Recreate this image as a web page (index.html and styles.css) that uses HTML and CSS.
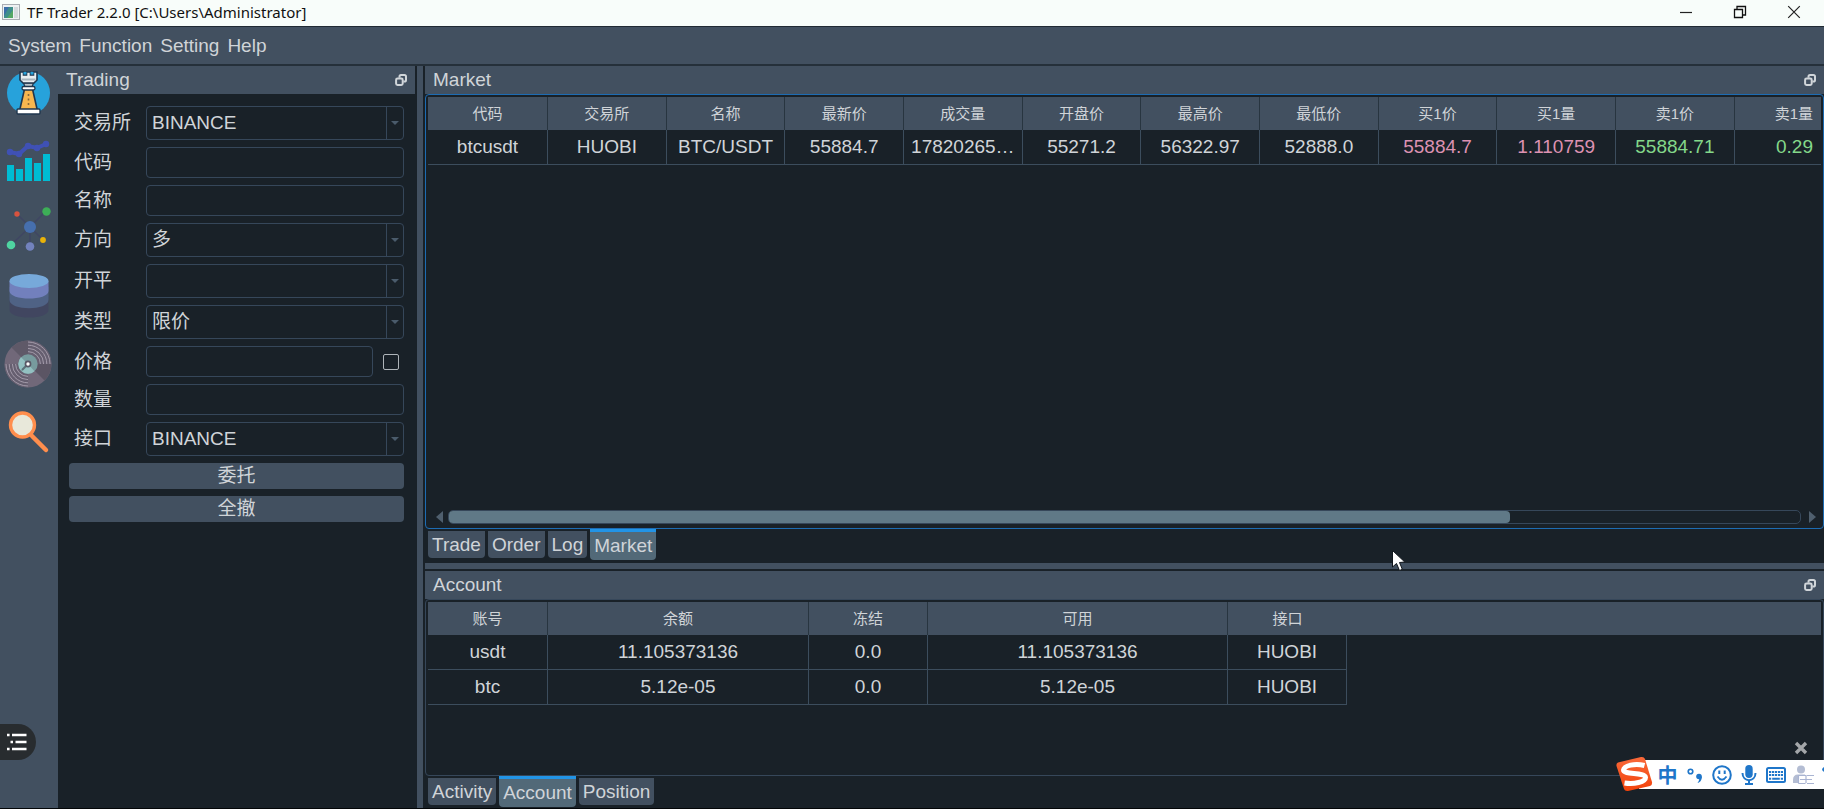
FILE: index.html
```html
<!DOCTYPE html>
<html lang="zh-CN">
<head>
<meta charset="utf-8">
<title>TF Trader 2.2.0</title>
<link rel="stylesheet" href="styles.css">
</head>
<body>
<svg class="defs" aria-hidden="true">
  <symbol id="float" viewBox="0 0 12 12">
    <path d="M4.5 3.8V2.6Q4.5 1 6 1H9.4Q11 1 11 2.6V6Q11 7.6 9.4 7.6H8.4" fill="none" stroke="#d0d5d9" stroke-width="2"/>
    <rect x="1.1" y="4.6" width="6.6" height="6.4" rx="1.4" fill="none" stroke="#d0d5d9" stroke-width="2"/>
  </symbol>
  <symbol id="down" viewBox="0 0 8 4"><path d="M0 0H8L4 4Z" fill="#4a5b6b"/></symbol>
</svg>

<header class="titlebar">
  <svg class="app-icon" viewBox="0 0 18 16" aria-hidden="true">
    <rect x=".5" y=".5" width="17" height="15" fill="#eef1f2" stroke="#a9aeb3"/>
    <rect x="2" y="3" width="9" height="11" fill="#3f8f8a"/><path d="M2 3H7L2 12Z" fill="#3b6fa8"/><path d="M11 6V14H5Z" fill="#55a865"/>
    <rect x="12" y="3" width="4" height="11" fill="#d5dadd"/>
  </svg>
  <h1 class="app-title">TF Trader 2.2.0 [C:\Users\Administrator]</h1>
  <div class="window-buttons">
    <button class="window-button" aria-label="Minimize"><svg viewBox="0 0 14 14"><path d="M1 7.5H13" stroke="#222" stroke-width="1.2"/></svg></button>
    <button class="window-button" aria-label="Restore"><svg viewBox="0 0 14 14"><path d="M1.5 4.5H9.5V12.5H1.5ZM4 4.5V1.5H12.5V10H9.5" fill="none" stroke="#111" stroke-width="1.3"/></svg></button>
    <button class="window-button" aria-label="Close"><svg viewBox="0 0 14 14"><path d="M1.2 1.2L12.8 12.8M12.8 1.2L1.2 12.8" stroke="#222" stroke-width="1.2"/></svg></button>
  </div>
</header>

<nav class="menubar">
  <button class="menu-item">System</button>
  <button class="menu-item">Function</button>
  <button class="menu-item">Setting</button>
  <button class="menu-item">Help</button>
</nav>

<div class="workspace">
  <aside class="toolbar">
    <button class="tool" aria-label="Strategy"><svg viewBox="0 0 48 48">
      <circle cx="24.5" cy="25" r="21.5" fill="#27a2db"/>
      <path d="M20.5 21H28.5L33.500 43H15.5Z" fill="#f7b64f" stroke="#20364d" stroke-width="1.6"/>
      <path d="M19.5 15H29.5L27.5 20H21.5Z" fill="#b9c3ca" stroke="#20364d" stroke-width="1.2"/>
      <path d="M16 4H19.5V7H22.5V4H26.5V7H29.5V4H33V12L30 15H19L16 12Z" fill="#e9eef1" stroke="#20364d" stroke-width="1.6"/>
      <path d="M19.5 4V6.500H22.5V4ZM26.500 4V6.500H29.500V4Z" fill="#27a2db"/>
      <path d="M17.5 11.5H31.5" stroke="#a9b5bd" stroke-width="2"/>
      <rect x="18" y="18.5" width="13" height="3.5" rx="1.7" fill="#fff" stroke="#20364d" stroke-width="1.3"/>
      <path d="M24.5 26V39" stroke="#8a6a3a" stroke-width="1.6" stroke-dasharray="2 2.5"/>
      <rect x="13" y="41" width="23" height="5" rx="1" fill="#fff" stroke="#20364d" stroke-width="1.4"/>
    </svg></button>
    <button class="tool" aria-label="Chart"><svg viewBox="0 0 48 48">
      <path d="M3 29H10V45H3ZM12 33H19V45H12ZM21 22H28V45H21ZM30 27H37V45H30ZM39 18H46V45H39Z" fill="#00bcd4"/>
      <path d="M6 16L15 18L24 10L33 12L42 8" fill="none" stroke="#3f51b5" stroke-width="4"/>
      <g fill="#3f51b5"><circle cx="6" cy="16" r="3.2"/><circle cx="15" cy="18" r="3.2"/><circle cx="24" cy="10" r="3.2"/><circle cx="33" cy="12" r="3.2"/><circle cx="42" cy="8" r="3.2"/></g>
    </svg></button>
    <button class="tool" aria-label="Network"><svg viewBox="0 0 48 48">
      <path d="M26 23L13 10M26 23L42 7M26 23L7 41M26 23L39 36M26 23V42" stroke="#3f4663" stroke-width="1.5"/>
      <circle cx="26" cy="23" r="6" fill="#466fae"/><circle cx="13" cy="10" r="2.7" fill="#d8533f"/><circle cx="42.5" cy="7.5" r="4.2" fill="#3dae57"/><circle cx="7" cy="41" r="4.3" fill="#4fd4a1"/><circle cx="39" cy="36" r="2.9" fill="#eab308"/><circle cx="26" cy="42.5" r="4.3" fill="#7282bd"/>
    </svg></button>
    <button class="tool" aria-label="Database"><svg viewBox="0 0 48 48">
      <path d="M5.500 25V38C5.500 48 44.500 48 44.500 38V25Z" fill="#414660"/>
      <path d="M5.500 15V28C5.500 39 44.500 39 44.500 28V15Z" fill="#4f6285"/>
      <path d="M5.500 9V19C5.500 29 44.500 29 44.500 19V9Z" fill="#7280bd"/>
      <ellipse cx="25" cy="9" rx="19.5" ry="7" fill="#77a9da"/>
    </svg></button>
    <button class="tool" aria-label="Backtest"><svg viewBox="0 0 48 48">
      <circle cx="24" cy="24" r="23.5" fill="#716879"/>
      <path d="M24 24V.5A23.5 23.5 0 0 0 7.5 7.5Z" fill="#5f5968"/><path d="M24 24H47.5A23.5 23.5 0 0 1 40.5 40.5Z" fill="#5b5564"/>
      <path d="M24 24V.5A23.5 23.5 0 0 1 47.5 24ZM24 24V47.5A23.5 23.5 0 0 1 .5 24Z" fill="#665f70"/>
      <g fill="none" stroke="#a39baa" stroke-width="1"><path d="M24 2A22 22 0 0 1 46 24M24 5.2A18.8 18.8 0 0 1 42.8 24M24 8.4A15.6 15.6 0 0 1 39.6 24M24 11.6A12.4 12.4 0 0 1 36.4 24M2 24A22 22 0 0 0 24 46M5.2 24A18.8 18.8 0 0 0 24 42.8M8.4 24A15.6 15.6 0 0 0 24 39.6M11.6 24A12.4 12.4 0 0 0 24 36.4"/></g>
      <circle cx="24" cy="24" r="9.7" fill="#779b9e"/><path d="M24 24L17 17.3A9.7 9.7 0 0 0 17 30.7ZM24 24L17.5 31.2A9.7 9.7 0 0 0 30.5 31.2Z" fill="#93c0c1"/>
      <path d="M24 24L18 30" stroke="#5c7178" stroke-width="2"/><circle cx="24" cy="24" r="3.4" fill="#595866"/><circle cx="24" cy="24" r="1.7" fill="#fff"/>
    </svg></button>
    <button class="tool" aria-label="Search"><svg viewBox="0 0 48 48">
      <path d="M28 28L42 42" stroke="#ff8e4d" stroke-width="4.5" stroke-linecap="round"/>
      <circle cx="18.5" cy="17" r="12" fill="#e8e8da" stroke="#ff8e4d" stroke-width="3.4"/>
    </svg></button>
  </aside>

  <section class="dock trading">
    <header class="dock-title"><h2>Trading</h2><button class="float-button" aria-label="Float Trading"><svg><use href="#float"/></svg></button></header>
    <form class="order-form">
      <label class="field-label" for="exchange">交易所</label>
      <div class="combo"><select id="exchange"><option>BINANCE</option></select><svg><use href="#down"/></svg></div>
      <label class="field-label" for="symbol">代码</label>
      <input class="line-edit" id="symbol" type="text">
      <label class="field-label" for="name">名称</label>
      <input class="line-edit" id="name" type="text">
      <label class="field-label" for="direction">方向</label>
      <div class="combo"><select id="direction"><option>多</option></select><svg><use href="#down"/></svg></div>
      <label class="field-label" for="offset">开平</label>
      <div class="combo"><select id="offset"><option></option></select><svg><use href="#down"/></svg></div>
      <label class="field-label" for="type">类型</label>
      <div class="combo"><select id="type"><option>限价</option></select><svg><use href="#down"/></svg></div>
      <label class="field-label" for="price">价格</label>
      <div class="price-row"><input class="line-edit" id="price" type="text"><input class="check" type="checkbox" aria-label="价格"></div>
      <label class="field-label" for="volume">数量</label>
      <input class="line-edit" id="volume" type="text">
      <label class="field-label" for="gateway">接口</label>
      <div class="combo"><select id="gateway"><option>BINANCE</option></select><svg><use href="#down"/></svg></div>
      <button class="push" type="button">委托</button>
      <button class="push" type="button">全撤</button>
    </form>
  </section>

  <div class="splitter-v"></div>

  <main class="right">
    <section class="dock market">
      <header class="dock-title"><h2>Market</h2><button class="float-button" aria-label="Float Market"><svg><use href="#float"/></svg></button></header>
      <div class="frame frame-active">
        <table class="grid market-grid">
          <thead><tr><th>代码</th><th>交易所</th><th>名称</th><th>最新价</th><th>成交量</th><th>开盘价</th><th>最高价</th><th>最低价</th><th>买1价</th><th>买1量</th><th>卖1价</th><th class="clipped">卖1量</th></tr></thead>
          <tbody><tr><td>btcusdt</td><td>HUOBI</td><td>BTC/USDT</td><td>55884.7</td><td>17820265…</td><td>55271.2</td><td>56322.97</td><td>52888.0</td><td class="bid">55884.7</td><td class="bid">1.110759</td><td class="ask">55884.71</td><td class="ask clipped">0.29</td></tr></tbody>
        </table>
        <div class="scrollbar">
          <svg class="scroll-arrow" viewBox="0 0 7 14"><path d="M7 1V13L0 7Z" fill="#4f5f6e"/></svg>
          <div class="scroll-track"><div class="scroll-thumb"></div></div>
          <svg class="scroll-arrow" viewBox="0 0 7 14"><path d="M0 1V13L7 7Z" fill="#4f5f6e"/></svg>
        </div>
      </div>
    </section>
    <div class="tabs">
      <button class="tab">Trade</button><button class="tab">Order</button><button class="tab">Log</button><button class="tab tab-active">Market</button>
    </div>
    <div class="splitter-h"></div>
    <section class="dock account">
      <header class="dock-title"><h2>Account</h2><button class="float-button" aria-label="Float Account"><svg><use href="#float"/></svg></button></header>
      <div class="frame">
        <table class="grid account-grid">
          <colgroup><col class="col-id"><col class="col-balance"><col class="col-frozen"><col class="col-free"><col class="col-gateway"><col></colgroup>
          <thead><tr><th>账号</th><th>余额</th><th>冻结</th><th>可用</th><th class="last">接口</th><th></th></tr></thead>
          <tbody>
            <tr><td>usdt</td><td>11.105373136</td><td>0.0</td><td>11.105373136</td><td>HUOBI</td></tr>
            <tr><td>btc</td><td>5.12e-05</td><td>0.0</td><td>5.12e-05</td><td>HUOBI</td></tr>
          </tbody>
        </table>
      </div>
    </section>
    <div class="tabs tabs-bottom">
      <button class="tab">Activity</button><button class="tab tab-active">Account</button><button class="tab">Position</button>
    </div>
  </main>
</div>

<button class="outline-toggle" aria-label="Outline"><svg viewBox="0 0 20 18"><path d="M0 2H2.600M5 2H19.500M3.500 9H6M8.500 9H19.500M0 16H2.600M5 16H19.500" stroke="#fff" stroke-width="2.6"/></svg></button>

<svg class="cursor" viewBox="0 0 16 24" aria-hidden="true"><path d="M1.5 1.5V18L5.5 14.5L8.5 21.5L11.3 20.3L8.5 13.5L13.8 13Z" fill="#fff" stroke="#10161c" stroke-width="1"/></svg>

<button class="ime-close" aria-label="Close"><svg viewBox="0 0 14 14"><path d="M2 2L12 12M12 2L2 12" stroke="#a3a6a9" stroke-width="3.4"/></svg></button>
<div class="ime">
  <svg class="ime-logo" viewBox="0 0 38 36" aria-hidden="true">
    <defs><linearGradient id="orange" x1="0" y1="0" x2="0" y2="1"><stop offset="0" stop-color="#f9693a"/><stop offset="1" stop-color="#f2420a"/></linearGradient></defs>
    <path d="M3 6.5L26 1Q29 .5 30 3L37 26Q37.5 29 35 30L13 35Q10 35.5 9 33L1.5 10Q1 7.500 3 6.5Z" fill="url(#orange)"/>
    <path d="M29.5 9.5C20 7 9 9.5 8.5 14C8.5 19 30 16 30.5 21.5C30.5 26 19 28.5 9.5 27" fill="none" stroke="#fff" stroke-width="5"/>
  </svg>
  <button class="ime-lang">中</button>
  <button class="ime-item" aria-label="Punctuation"><svg viewBox="0 0 20 20"><circle cx="5.5" cy="6.5" r="2.3" fill="none" stroke="#1f76c9" stroke-width="1.6"/><circle cx="14" cy="11.5" r="2.8" fill="#1f76c9"/><path d="M16.8 11.5C17 15 15 17.5 12.5 18C13.8 16 14.5 15 14 13Z" fill="#1f76c9"/></svg></button>
  <button class="ime-item" aria-label="Emoji"><svg viewBox="0 0 20 20"><circle cx="10" cy="10" r="8.8" fill="none" stroke="#1f76c9" stroke-width="2"/><path d="M7.3 5.5V9M12.7 5.5V9" stroke="#1f76c9" stroke-width="2"/><path d="M5.5 11.5Q10 18 14.5 11.5" fill="none" stroke="#1f76c9" stroke-width="1.8"/></svg></button>
  <button class="ime-item" aria-label="Voice"><svg viewBox="0 0 20 20"><rect x="6.3" y="0" width="7.4" height="13" rx="3.7" fill="#1f76c9"/><path d="M3.5 8C3.5 17.5 16.5 17.5 16.5 8M10 15V19M6 19H14" fill="none" stroke="#1f76c9" stroke-width="2"/></svg></button>
  <button class="ime-item" aria-label="Keyboard"><svg viewBox="0 0 20 20"><rect x="1" y="3" width="18" height="14" rx="1.5" fill="none" stroke="#1f76c9" stroke-width="2"/><path d="M3 7H17M3 10H17" stroke="#1f76c9" stroke-width="1.8" stroke-dasharray="2.2 .75"/><path d="M3 13.7H17" stroke="#1f76c9" stroke-width="2" stroke-dasharray="2.2 1 7.6 1"/></svg></button>
  <button class="ime-item ime-user" aria-label="Account"><svg viewBox="0 0 22 20"><circle cx="8" cy="4.5" r="4" fill="#b4bdd3"/><path d="M0 18V15Q0 9.5 5 9.5H12V18Z" fill="#b4bdd3"/><rect x="5" y="10" width="16" height="9" fill="#fff"/><path d="M5.5 10.5H12.5M14 10.5H21M7 14.5H19M13 10V18M5.5 18.5H12.5M14 18.5H21M5.5 10V18.5" fill="none" stroke="#a9b4d2" stroke-width="1.2"/></svg></button>
  <svg class="ime-edge" viewBox="0 0 2 20" aria-hidden="true"><path d="M2 3Q0 4 0 6L2 8Z" fill="#1f76c9"/></svg>
</div>
</body>
</html>
```

FILE: styles.css
```css
:root {
  --panel: #192128;
  --bar: #425060;
  --line: #36475a;
  --text: #d0d4d8;
  --accent: #2294e6;
}

* { box-sizing: border-box; }

body {
  margin: 0;
  height: 100vh;
  display: flex;
  flex-direction: column;
  overflow: hidden;
  background: var(--panel);
  border-bottom: 1px solid #030608;
  color: var(--text);
  font: 19px/24px "Liberation Sans", "Noto Sans CJK SC", sans-serif;
}

button, input, select { font: inherit; color: inherit; margin: 0; padding: 0; border: 0; background: none; }
h1, h2 { margin: 0; font: inherit; }
svg { display: block; }
.defs { position: absolute; width: 0; height: 0; }

.titlebar {
  display: flex;
  align-items: center;
  height: 26px;
  flex: none;
  padding: 0 23px 3px 2px;
  gap: 7px;
  background: #f8fdfa;
  color: #111;
}
.app-icon { width: 18px; height: 16px; }
.app-title { font: 15px/22px "Noto Sans", "Noto Sans CJK SC", sans-serif; }
.window-buttons { margin-left: auto; display: flex; gap: 40px; }
.window-button { width: 14px; height: 14px; }

.menubar {
  display: flex;
  gap: 8px;
  align-items: center;
  flex: none;
  height: 40px;
  padding: 0 8px;
  background: var(--bar);
  border-top: 1px solid #202a33;
  border-bottom: 2px solid #25303a;
}

.workspace { flex: 1; display: flex; min-height: 0; }

.toolbar {
  width: 58px;
  flex: none;
  display: flex;
  flex-direction: column;
  align-items: center;
  gap: 20px;
  padding: 2px 6px 0 4px;
  background: var(--bar);
}
.tool, .tool svg { width: 48px; height: 48px; }

.dock { display: flex; flex-direction: column; min-height: 0; }
.dock-title {
  display: flex;
  flex: none;
  align-items: center;
  justify-content: space-between;
  height: 28px;
  padding: 0 8px;
  background: var(--bar);
}
.float-button, .float-button svg { width: 12px; height: 12px; }

.trading { width: 357px; flex: none; }
.order-form {
  display: grid;
  grid-template-columns: 70px 1fr;
  column-gap: 7px;
  row-gap: 7px;
  align-items: center;
  padding: 12px 11px 0;
}
.field-label { padding-left: 5px; }
.line-edit {
  width: 100%;
  min-width: 0;
  height: 31px;
  padding: 0 6px;
  border: 1px solid var(--line);
  border-radius: 4px;
}
.combo {
  display: grid;
  grid-template-columns: 1fr 16px;
  align-items: center;
  height: 34px;
  border: 1px solid var(--line);
  border-radius: 4px;
}
.combo select {
  appearance: none;
  height: 32px;
  padding: 0 5px;
  border-right: 1px solid var(--line);
}
.combo svg { width: 8px; height: 4px; justify-self: center; }
.price-row { display: flex; align-items: center; gap: 10px; padding-right: 5px; }
.check { appearance: none; flex: none; width: 16px; height: 16px; border: 1px solid #aeb4b9; border-radius: 2px; }
.push {
  grid-column: 1 / -1;
  height: 26px;
  line-height: 26px;
  background: var(--bar);
  border-radius: 4px;
}

.splitter-v {
  width: 10px;
  flex: none;
  background: var(--bar);
  border: solid var(--panel);
  border-width: 0 2px;
}

.right { flex: 1; min-width: 0; display: flex; flex-direction: column; }
.market { flex: 463; }
.account { flex: 205; }

.frame {
  flex: 1;
  min-height: 0;
  display: flex;
  flex-direction: column;
  padding: 2px;
  border: 1px solid var(--line);
  border-radius: 4px;
}
.frame-active { border-color: #1d6cb3; }

.grid { width: 100%; table-layout: fixed; border-collapse: separate; border-spacing: 0; }
.grid th {
  height: 33px;
  padding: 0;
  font-size: 15px;
  font-weight: 400;
  line-height: 24px;
  background: var(--bar);
  border-right: 1px solid #283540;
}
.grid th:last-child, .grid .last { border-right: 0; }
.grid td {
  height: 35px;
  padding: 0;
  text-align: center;
  white-space: nowrap;
  border-right: 1px solid #3c4d5d;
  border-bottom: 1px solid #3c4d5d;
}
.market-grid th { width: 8.52%; }
.market-grid th:first-child { width: 120px; }
.market-grid th:last-child { width: auto; }
.market-grid td:last-child { border-right: 0; }
.grid .clipped { text-align: right; padding-right: 8px; }
.grid .bid { color: #dd92b2; }
.grid .ask { color: #84d88a; }
.col-id { width: 120px; }
.col-balance { width: 261px; }
.col-frozen { width: 119px; }
.col-free { width: 300px; }
.col-gateway { width: 119px; }

.scrollbar { margin-top: auto; display: flex; align-items: center; gap: 5px; padding: 0 5px 2px 8px; }
.scroll-arrow { width: 7px; height: 14px; flex: none; }
.scroll-track { flex: 1; height: 14px; margin-right: 3px; border: 1px solid var(--line); border-radius: 5px; }
.scroll-thumb { width: 78.5%; height: 12px; border-radius: 4px; background: #607987; }

.tabs { display: flex; flex: none; align-items: flex-start; gap: 3px; height: 34px; padding: 2px 3px 0; }
.tabs-bottom { height: 32px; }
.tab { height: 27px; padding: 0 4px; background: var(--bar); border-radius: 0 0 4px 4px; }
.tab-active {
  height: 31px;
  margin-top: -2px;
  border-top: 3px solid var(--accent);
  background: #526978;
}

.splitter-h { height: 8px; flex: none; background: var(--bar); border-bottom: 2px solid var(--panel); }

.outline-toggle {
  position: absolute;
  left: 0;
  bottom: 49px;
  display: flex;
  align-items: center;
  width: 36px;
  height: 36px;
  padding-left: 7px;
  background: #282c2f;
  border-radius: 0 18px 18px 0;
}
.outline-toggle svg { width: 20px; height: 18px; }

.cursor { position: absolute; left: 1391px; top: 549px; width: 16px; height: 24px; }

.ime-close { position: absolute; right: 16px; bottom: 54px; width: 14px; height: 14px; }
.ime {
  position: absolute;
  right: 0;
  bottom: 20px;
  display: flex;
  align-items: center;
  gap: 7px;
  width: 185px;
  height: 29px;
  padding-left: 18px;
  background: #fff;
  color: #1f76c9;
}
.ime-logo { position: absolute; left: -24px; top: -4px; width: 38px; height: 36px; }
.ime-lang { width: 21px; font: 700 20px/24px "Noto Sans CJK SC", sans-serif; }
.ime-item { flex: none; }
.ime-item, .ime-item svg { width: 20px; height: 20px; }
.ime-user, .ime-user svg { width: 22px; }
.ime-edge { position: absolute; right: 0; top: 4px; width: 2px; height: 20px; }
```
